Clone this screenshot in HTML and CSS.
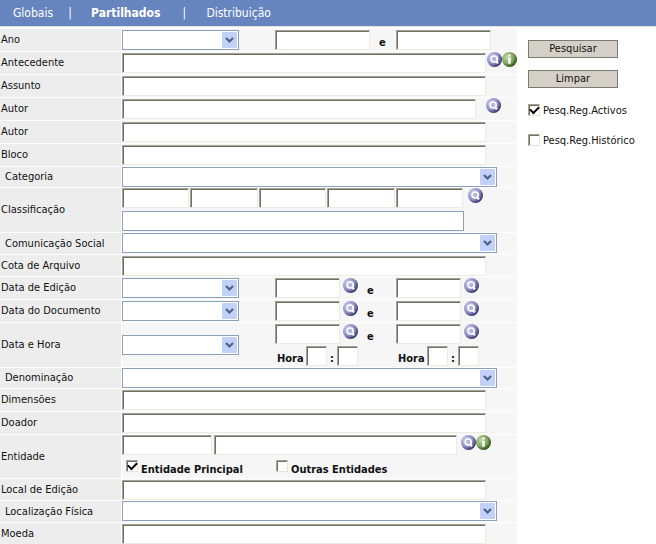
FILE: index.html
```
<!DOCTYPE html>
<html lang="pt">
<head>
<meta charset="utf-8">
<title>Pesquisa</title>
<link rel="stylesheet" href="styles.css">
</head>
<body>
<svg class="defs" aria-hidden="true">
  <defs>
    <radialGradient id="violet" cx="35%" cy="35%" r="70%">
      <stop offset="0" stop-color="#d8d8f2"/><stop offset="0.6" stop-color="#8f8fc6"/><stop offset="1" stop-color="#2c2c62"/>
    </radialGradient>
    <radialGradient id="green" cx="35%" cy="35%" r="70%">
      <stop offset="0" stop-color="#c2dca6"/><stop offset="0.6" stop-color="#7fa45e"/><stop offset="1" stop-color="#294713"/>
    </radialGradient>
    <symbol id="search" viewBox="0 0 15 15">
      <circle cx="7.5" cy="7.5" r="7.5" fill="url(#violet)"/>
      <circle cx="7.2" cy="7" r="3" fill="#b4b4e0" stroke="#fff" stroke-width="1.6"/>
      <path d="M9 9l2 2.4" stroke="#fff" stroke-width="2"/>
    </symbol>
    <symbol id="info" viewBox="0 0 15 15">
      <circle cx="7.5" cy="7.5" r="7.5" fill="url(#green)"/>
      <path d="M6.3 2.6h2.4v2H6.3zM6 5.8h2.7v6H6.3v-4.6H6z" fill="#fff"/>
    </symbol>
    <symbol id="arrow" viewBox="0 0 15 16">
      <rect width="15" height="16" rx="1" fill="#c1d1fa"/>
      <path d="M4 6l3.5 3.5L11 6" fill="none" stroke="#4a6188" stroke-width="2.2"/>
    </symbol>
  </defs>
</svg>

<nav class="tabs">
  <a href="#globais">Globais</a>
  <span class="bar">|</span>
  <a href="#partilhados" class="current">Partilhados</a>
  <span class="bar">|</span>
  <a href="#distribuicao">Distribuição</a>
</nav>

<form class="page">
  <div class="rows">
    <div class="row">
      <label class="name" for="ano">Ano</label>
      <div class="field range">
        <span class="pick"><select id="ano"></select><svg><use href="#arrow"/></svg></span>
        <span class="part year"><input type="text" aria-label="Ano inicial"><b>e</b></span>
        <span class="part year"><input type="text" aria-label="Ano final"></span>
      </div>
    </div>
    <div class="row">
      <label class="name" for="antecedente">Antecedente</label>
      <div class="field line">
        <input type="text" id="antecedente">
        <span class="tools"><button type="button" aria-label="Procurar"><svg><use href="#search"/></svg></button><button type="button" aria-label="Informação"><svg><use href="#info"/></svg></button></span>
      </div>
    </div>
    <div class="row">
      <label class="name" for="assunto">Assunto</label>
      <div class="field line"><input type="text" id="assunto"><span class="tools"></span></div>
    </div>
    <div class="row">
      <label class="name" for="autor1">Autor</label>
      <div class="field line author">
        <input type="text" id="autor1">
        <span class="tools"><button type="button" aria-label="Procurar"><svg><use href="#search"/></svg></button></span>
      </div>
    </div>
    <div class="row">
      <label class="name" for="autor2">Autor</label>
      <div class="field line"><input type="text" id="autor2"><span class="tools"></span></div>
    </div>
    <div class="row">
      <label class="name" for="bloco">Bloco</label>
      <div class="field line"><input type="text" id="bloco"><span class="tools"></span></div>
    </div>
    <div class="row short">
      <label class="name indent" for="categoria">Categoria</label>
      <div class="field wide"><span class="pick"><select id="categoria"></select><svg><use href="#arrow"/></svg></span></div>
    </div>
    <div class="row tall">
      <label class="name" for="classe">Classificação</label>
      <div class="field stack">
        <div class="codes">
          <input type="text" id="classe"><input type="text" aria-label="Nível 2"><input type="text" aria-label="Nível 3"><input type="text" aria-label="Nível 4"><input type="text" aria-label="Nível 5">
          <button type="button" aria-label="Procurar"><svg><use href="#search"/></svg></button>
        </div>
        <input type="text" class="flat" aria-label="Descrição da classificação">
      </div>
    </div>
    <div class="row medium">
      <label class="name indent" for="social">Comunicação Social</label>
      <div class="field wide"><span class="pick"><select id="social"></select><svg><use href="#arrow"/></svg></span></div>
    </div>
    <div class="row medium">
      <label class="name" for="cota">Cota de Arquivo</label>
      <div class="field line"><input type="text" id="cota"><span class="tools"></span></div>
    </div>
    <div class="row">
      <label class="name" for="edicao">Data de Edição</label>
      <div class="field range">
        <span class="pick"><select id="edicao"></select><svg><use href="#arrow"/></svg></span>
        <span class="part"><input type="text" aria-label="Data inicial"><button type="button" aria-label="Procurar"><svg><use href="#search"/></svg></button><b>e</b></span>
        <span class="part"><input type="text" aria-label="Data final"><button type="button" aria-label="Procurar"><svg><use href="#search"/></svg></button></span>
      </div>
    </div>
    <div class="row">
      <label class="name" for="documento">Data do Documento</label>
      <div class="field range">
        <span class="pick"><select id="documento"></select><svg><use href="#arrow"/></svg></span>
        <span class="part"><input type="text" aria-label="Data inicial"><button type="button" aria-label="Procurar"><svg><use href="#search"/></svg></button><b>e</b></span>
        <span class="part"><input type="text" aria-label="Data final"><button type="button" aria-label="Procurar"><svg><use href="#search"/></svg></button></span>
      </div>
    </div>
    <div class="row tall">
      <label class="name" for="hora">Data e Hora</label>
      <div class="field range">
        <span class="pick"><select id="hora"></select><svg><use href="#arrow"/></svg></span>
        <div class="moment">
          <span class="part"><input type="text" aria-label="Data inicial"><button type="button" aria-label="Procurar"><svg><use href="#search"/></svg></button><b>e</b></span>
          <span class="clock"><label for="h1">Hora</label><input type="text" id="h1"><b>:</b><input type="text" aria-label="Minutos"></span>
        </div>
        <div class="moment">
          <span class="part"><input type="text" aria-label="Data final"><button type="button" aria-label="Procurar"><svg><use href="#search"/></svg></button></span>
          <span class="clock"><label for="h2">Hora</label><input type="text" id="h2"><b>:</b><input type="text" aria-label="Minutos"></span>
        </div>
      </div>
    </div>
    <div class="row short">
      <label class="name indent" for="denominacao">Denominação</label>
      <div class="field wide"><span class="pick"><select id="denominacao"></select><svg><use href="#arrow"/></svg></span></div>
    </div>
    <div class="row">
      <label class="name" for="dimensoes">Dimensões</label>
      <div class="field line"><input type="text" id="dimensoes"><span class="tools"></span></div>
    </div>
    <div class="row">
      <label class="name" for="doador">Doador</label>
      <div class="field line"><input type="text" id="doador"><span class="tools"></span></div>
    </div>
    <div class="row double">
      <label class="name" for="entidade">Entidade</label>
      <div class="field stack">
        <div class="entity">
          <input type="text" id="entidade" class="code"><input type="text" aria-label="Nome da entidade">
          <span class="tools"><button type="button" aria-label="Procurar"><svg><use href="#search"/></svg></button><button type="button" aria-label="Informação"><svg><use href="#info"/></svg></button></span>
        </div>
        <div class="kinds">
          <label class="check"><input type="checkbox" checked>Entidade Principal</label>
          <label class="check"><input type="checkbox">Outras Entidades</label>
        </div>
      </div>
    </div>
    <div class="row medium">
      <label class="name" for="local">Local de Edição</label>
      <div class="field line"><input type="text" id="local"><span class="tools"></span></div>
    </div>
    <div class="row medium">
      <label class="name indent" for="fisica">Localização Física</label>
      <div class="field wide"><span class="pick"><select id="fisica"></select><svg><use href="#arrow"/></svg></span></div>
    </div>
    <div class="row medium">
      <label class="name" for="moeda">Moeda</label>
      <div class="field line"><input type="text" id="moeda"><span class="tools"></span></div>
    </div>
  </div>

  <aside class="actions">
    <button type="submit">Pesquisar</button>
    <button type="reset">Limpar</button>
    <label class="check"><input type="checkbox" checked>Pesq.Reg.Activos</label>
    <label class="check"><input type="checkbox">Pesq.Reg.Histórico</label>
  </aside>
</form>
</body>
</html>
```
FILE: styles.css
```
* { box-sizing: border-box; }

body {
  margin: 0;
  background: #fff;
  color: #111;
  font: 11px/14px "DejaVu Sans Condensed", "DejaVu Sans", sans-serif;
  overflow-x: hidden;
}

.defs { position: absolute; width: 0; height: 0; }

/* Top tabs */
.tabs {
  display: flex;
  align-items: center;
  height: 27px;
  padding-left: 13px;
  background: #6685be;
  border-bottom: 1px solid #dfe3e2;
  color: #fff;
  font-size: 12px;
}
.tabs a { color: #fff; text-decoration: none; }
.tabs .current { font-weight: bold; }
.tabs .bar { width: 38px; padding-right: 4px; text-align: center; }
.tabs .current + .bar { width: 46px; padding: 0 0 0 2px; }

/* Page columns */
.page { display: flex; margin: 0; padding-top: 2px; }
.rows { flex: 1; min-width: 0; }
.actions {
  display: flex;
  flex-direction: column;
  align-items: flex-start;
  gap: 12px;
  width: 139px;
  padding: 11px 0 0 11px;
}

/* Rows */
.row {
  display: grid;
  grid-template-columns: 121px 1fr;
  column-gap: 1px;
  min-height: 23px;
  border-bottom: 1px solid #fff;
}
.row.short { min-height: 21px; }
.row.medium { min-height: 22px; }
.row.tall { min-height: 45px; }
.row.double { min-height: 44px; }
.name {
  display: flex;
  align-items: center;
  padding-left: 1px;
  background: #ededed;
}
.name.indent { padding-left: 5px; }
.field { display: flex; background: #f6f6f6; min-width: 0; }

/* Controls */
input[type="text"] {
  flex: 1;
  min-width: 0;
  height: 20px;
  padding: 0 2px;
  border: 1px solid #ecebe4;
  border-top-color: #a5a297;
  border-left-color: #a5a297;
  box-shadow: inset 1px 1px #716f64;
  background: #fff;
  font: inherit;
}
input[type="text"].flat { flex: none; width: 342px; border-color: #8aa0bb; box-shadow: none; }
.pick { position: relative; display: flex; width: 117px; height: 20px; }
.pick select {
  appearance: none;
  width: 100%;
  height: 20px;
  border: 1px solid #8aa0bb;
  border-radius: 0;
  background: #fff;
  font: inherit;
}
.pick svg {
  position: absolute;
  top: 2px;
  right: 2px;
  width: 15px;
  height: 16px;
  pointer-events: none;
}
.field button {
  width: 15px;
  height: 15px;
  padding: 0;
  border: 0;
  background: none;
}
.field button svg { display: block; width: 15px; height: 15px; }

.line { align-items: center; }
.tools { display: flex; align-self: flex-start; width: 31px; padding-left: 1px; }
.author .tools { width: 41px; padding-left: 10px; }

.wide { align-items: flex-start; padding-right: 20px; }
.wide .pick { flex: 1; }

.stack { flex-direction: column; gap: 3px; }
.codes { display: flex; align-items: flex-end; gap: 1px; width: 361px; height: 20px; }
.codes button { align-self: flex-start; margin-left: 4px; }

/* From / to ranges */
.range { align-items: center; }
.range > .pick { margin-right: 36px; }
.part { display: flex; align-items: flex-end; width: 121px; height: 20px; }
.part input[type="text"] { flex: none; width: 65px; }
.part.year input[type="text"] { width: 95px; }
.part button { align-self: flex-start; margin: 0 9px 0 3px; }
.part.year b { margin-left: 9px; }
.part b { line-height: 14px; }
.moment { display: flex; flex-direction: column; gap: 2px; }
.clock { display: flex; align-items: flex-end; padding-left: 2px; font-weight: bold; }
.clock input[type="text"] { flex: none; width: 21px; }
.clock label { width: 29px; }
.clock b { width: 10px; text-align: center; }

/* Entity */
.entity { display: flex; align-items: flex-end; gap: 2px; width: 369px; }
.entity input[type="text"] { flex: 246; }
.entity input[type="text"].code { flex: 87; }
.entity .tools { width: 32px; padding-left: 2px; }
.kinds { display: flex; padding: 2px 0 0 4px; font-weight: bold; }
.kinds .check { width: 150px; }

/* Tick boxes */
.check { display: flex; align-items: flex-end; gap: 3px; height: 17px; }
input[type="checkbox"] {
  appearance: none;
  display: grid;
  place-items: center;
  align-self: flex-start;
  width: 12px;
  height: 12px;
  margin: 0;
  border: 1px solid #e4e2da;
  border-top-color: #a5a297;
  border-left-color: #a5a297;
  box-shadow: inset 1px 1px #716f64;
  background: #fff;
}
input[type="checkbox"]:checked::before {
  content: "";
  width: 7px;
  height: 4px;
  margin-bottom: 2px;
  border: solid #000;
  border-width: 0 0 2px 2px;
  transform: rotate(-45deg);
}

.actions button {
  width: 90px;
  height: 18px;
  padding: 0;
  border: 1px solid #7d7a74;
  background: #d4d0c8;
  color: #111;
  font: inherit;
}
.actions .check { margin-top: 4px; height: 14px; white-space: nowrap; }
```
